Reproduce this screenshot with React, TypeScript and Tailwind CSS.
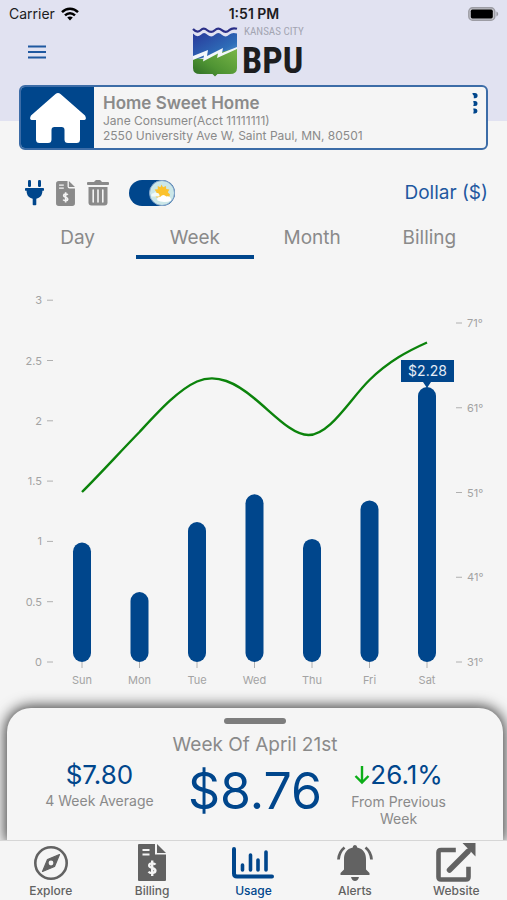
import { useState } from "react";
import type { ReactNode } from "react";

const BLUE = "#00468c";

const USAGE = [
  { day: "Sun", cost: 0.99 },
  { day: "Mon", cost: 0.58 },
  { day: "Tue", cost: 1.16 },
  { day: "Wed", cost: 1.39 },
  { day: "Thu", cost: 1.02 },
  { day: "Fri", cost: 1.34 },
  { day: "Sat", cost: 2.28 },
];
const COST_TICKS = [3, 2.5, 2, 1.5, 1, 0.5, 0];
const TEMP_TICKS = [71, 61, 51, 41, 31];
const BASE = 403;

const dayX = (i: number) => 82 + i * 57.5;
const costY = (v: number) => BASE - v * 120.6;
const tempY = (t: number) => BASE - (t - 31) * 8.475;

function WifiIcon() {
  return (
    <svg width="18" height="14" viewBox="0 0 18 14" fill="none" stroke="#000" strokeWidth="2.4" aria-hidden="true">
      <path d="M1 5.2C5.4.6 12.6.6 17 5.2" />
      <path d="M4 8.4c2.9-2.9 7.1-2.9 10 0" />
      <path d="M9 13.4 6.2 10.6c1.6-1.5 4-1.5 5.6 0z" fill="#000" stroke="none" />
    </svg>
  );
}

function BatteryIcon() {
  return (
    <svg width="31" height="14" viewBox="0 0 31 14" aria-hidden="true">
      <rect x=".8" y=".8" width="26" height="12.4" rx="3.8" fill="#c4c4ca" stroke="#9c9ca4" strokeWidth="1.4" />
      <rect x="2.8" y="2.6" width="22" height="8.8" rx="1.6" fill="#000" />
      <path d="M28.4 4.6c2.4.8 2.4 4 0 4.8z" fill="#9c9ca4" />
    </svg>
  );
}

function Logo() {
  return (
    <svg className="overflow-visible" width="112" height="50" viewBox="0 0 112 50" role="img" aria-label="Kansas City BPU">
      <defs>
        <linearGradient id="sky" x1="0" y1="0" x2="1" y2="1">
          <stop offset="0" stopColor="#28389a" />
          <stop offset=".65" stopColor="#2e6db8" />
          <stop offset="1" stopColor="#67a6d8" />
        </linearGradient>
        <linearGradient id="grass" x1="1" y1="0" x2="0" y2="1">
          <stop offset="0" stopColor="#7ab648" />
          <stop offset=".6" stopColor="#4f9433" />
          <stop offset="1" stopColor="#2b6a25" />
        </linearGradient>
      </defs>
      <path d="M1 6.600q4 4.400 8 1.200q3-3.400 6.400 0q4 3.400 7.400 0q3.600-3.400 7 0q4 3.400 7.200 0q3.400-3 8-1.200V23L1 33z" fill="url(#sky)" />
      <path d="M1 2q4 4.400 7.600 1.200q3.200-3 6.600 0q4 3.400 7.600 0q3.400-3 7 0q4 3.400 7.400 0q3.200-2.800 7.800-1.400" fill="none" stroke="#2b2f88" strokeWidth="2.200" />
      <path d="M1 31 11 32 26 26 45 21V41q0 6-7 6H25.500l-2.500 2.500-2.500-2.500H8q-7 0-7-6z" fill="url(#grass)" />
      <path d="M1 29 16 23 15 29 31 21 30 26 45 20V22L25 31 26 26.500 11 34.500 12 28.500 1 33z" fill="#f2f7fb" />
      <text x="52" y="8" fontSize="11" fill="#a3a5b2" className="font-['Roboto_Condensed','Liberation_Sans_Narrow',sans-serif]">KANSAS CITY</text>
      <text x="50" y="46" fontSize="36" fontWeight="700" fill="#1d1d20" className="font-['Roboto_Condensed','Liberation_Sans_Narrow',sans-serif]">BPU</text>
    </svg>
  );
}

function InvoiceIcon({ size, round }: { size: "small" | "large"; round?: boolean }) {
  return (
    <svg className={size === "small" ? "h-[25px] w-[19px]" : "h-[37px] w-[28px]"} viewBox="0 0 28 37" aria-hidden="true">
      <path
        d={round ? "M4 0H17V8q0 3 3 3H28V33q0 4-4 4H4q-4 0-4-4V4Q0 0 4 0z" : "M1 0H17V10.500H28V36q0 1-1 1H1q-1 0-1-1V1Q0 0 1 0z"}
        fill="currentColor"
      />
      <path d="M19 0 28 9H19z" fill="currentColor" />
      <path d="M4.500 6h7M4.500 10.500h7" stroke="#f5f5f5" strokeWidth="2" />
      <path d="M17.400 20.600c-1-1.600-6-2-6.200.8c-.2 3.200 6.400 2 6.200 5.400c-.2 3-5.600 2.600-6.800.8M14.200 16.500v15.500" stroke="#f5f5f5" strokeWidth="2.400" fill="none" />
    </svg>
  );
}

function PlugIcon() {
  return (
    <svg width="19" height="26" viewBox="0 0 19 26" fill="currentColor" aria-hidden="true">
      <rect x="3" y="0" width="3" height="7" rx="1.200" />
      <rect x="13" y="0" width="3" height="7" rx="1.200" />
      <path d="M.8 8h17.400q.8 0 .8.900v1q0 .9-.9.900h-.7c0 4.700-2.400 7.200-6.100 8V24.500q0 .8-.8.800h-2q-.8 0-.8-.8v-5.700c-3.700-.8-6.100-3.300-6.100-8H.9Q0 10.800 0 9.900v-1Q0 8 .8 8z" />
    </svg>
  );
}

function TrashIcon() {
  return (
    <svg width="22" height="26" viewBox="0 0 22 26" aria-hidden="true">
      <path d="M1 2h6l1.300-1.600q.3-.4.900-.4h3.600q.6 0 .9.400L15 2h6q1 0 1 1v1.200q0 .8-1 .8H1q-1 0-1-.8V3q0-1 1-1z" fill="currentColor" />
      <path d="M1.500 7h19v15.500q0 3-3 3h-13q-3 0-3-3z" fill="currentColor" />
      <path d="M6.200 10v12M11 10v12M15.800 10v12" stroke="#f5f5f5" strokeWidth="1.600" strokeLinecap="round" />
    </svg>
  );
}

function WeatherThumb() {
  return (
    <svg width="26" height="26" viewBox="0 0 26 26" aria-hidden="true">
      <circle cx="13" cy="13" r="12.500" fill="#cbe7e8" stroke="#86a6cb" />
      <path d="m12.500 4.500 1.500 2.700 3-1.200.2 3.100 3.200.4-1.600 2.700 2.200 2.300-1 3H7.500L5.200 14.500l2.200-2.400L5.600 9.600l3.200-.3-.1-3.200 2.700 1.200z" fill="#fbc22d" />
      <path d="M2.500 16.500q-1-3 2-3.200 1.600-2 3.600-.3 2.400-.3 2.600 3.500z" fill="#f0faf9" />
      <path d="M8.500 20.500q-1.400-3.300 2.600-3.500 3.200-3.800 6.300-.5 4.200-.9 4.800 4-3 1.500-7 1.500-4-.1-6.700-1.500z" fill="#fff" />
    </svg>
  );
}

function ExploreIcon() {
  return (
    <svg width="34" height="34" viewBox="0 0 34 34" aria-hidden="true">
      <circle cx="17" cy="17" r="15.700" fill="none" stroke="currentColor" strokeWidth="2.600" />
      <path d="M25.500 8.500 20.500 20.500 8.500 25.500 13.500 13.500z" fill="currentColor" stroke="currentColor" strokeWidth="1.200" strokeLinejoin="round" />
      <circle cx="17" cy="17" r="2.400" fill="#f5f5f5" />
    </svg>
  );
}

function UsageIcon() {
  return (
    <svg width="42" height="32" viewBox="0 0 42 32" fill="none" stroke="currentColor" strokeLinecap="round" aria-hidden="true">
      <path d="M2 2V26.500q0 3 3 3H40" strokeWidth="4" />
      <path d="M10.500 18v5M18.500 8v15M26 13v10M34 5v18" strokeWidth="3.600" />
    </svg>
  );
}

function BellIcon() {
  return (
    <svg width="36" height="36" viewBox="0 0 36 36" aria-hidden="true">
      <path d="M18 0q2.200 0 2.200 2.600C26.500 4 29 8.500 29 14v10.500l3.500 3.500v2H3.500v-2L7 24.500V14C7 8.500 9.500 4 15.800 2.600 15.800 0 18 0 18 0z" fill="currentColor" />
      <path d="M14 32h8q-1 4-4 4t-4-4z" fill="currentColor" />
      <path d="M7.500 2.500Q2 7 1.500 14.500M28.500 2.500Q34 7 34.500 14.500" fill="none" stroke="currentColor" strokeWidth="2.800" />
    </svg>
  );
}

function WebsiteIcon() {
  return (
    <svg width="40" height="39" viewBox="0 0 40 39" aria-hidden="true">
      <path d="M17.500 7H5Q2.500 7 2.500 9.500V34q0 2.500 2.500 2.500H30q2.500 0 2.500-2.500V26" fill="none" stroke="currentColor" strokeWidth="4.600" strokeLinecap="square" />
      <path d="M13.500 27 32 8.500" stroke="currentColor" strokeWidth="5.500" strokeLinecap="round" />
      <path d="M26.500 0H39.500V13.500z" fill="currentColor" />
    </svg>
  );
}

function Chart() {
  return (
    <svg className="block w-full font-['Inter',sans-serif]" viewBox="0 0 507 449" role="img" aria-label="Daily cost and temperature for the week">
      <g fontSize="11" fill="#a3a3a3">
        {COST_TICKS.map((v) => (
          <g key={v}>
            <text x="42" y={costY(v) + 4} textAnchor="end">{v}</text>
            <path d={`M47 ${costY(v)}h6`} stroke="#b0b0b0" />
          </g>
        ))}
        {TEMP_TICKS.map((t) => (
          <g key={t}>
            <path d={`M456 ${tempY(t)}h6`} stroke="#b0b0b0" />
            <text x="467" y={tempY(t) + 4}>{t}°</text>
          </g>
        ))}
        {USAGE.map(({ day, cost }, i) => (
          <g key={day}>
            <path d={`M${dayX(i)} ${BASE}v6`} stroke="#b0b0b0" />
            <rect x={dayX(i) - 9} y={costY(cost)} width="18" height={BASE - costY(cost)} rx="9" fill={BLUE} />
            <text x={dayX(i)} y="425" textAnchor="middle">{day}</text>
          </g>
        ))}
      </g>
      <path
        d="M82 233C101 214 120 193 139.500 173C159 152 178 131 197 122.500C217 114 236 124 254.500 139.500C273.500 155 292 176 308.500 176C330 176 350 140 369.500 121C389 102 408 92 427 83.500"
        fill="none"
        stroke="#0b830b"
        strokeWidth="2.400"
      />
      <path d="M401 101h53v22h-23l-4 6-4-6h-22z" fill={BLUE} />
      <text x="427.500" y="117" textAnchor="middle" fontSize="14" fill="#e4ecf6">$2.28</text>
    </svg>
  );
}

const TABS = ["Day", "Week", "Month", "Billing"];

const NAV: { label: string; icon: ReactNode }[] = [
  { label: "Explore", icon: <ExploreIcon /> },
  { label: "Billing", icon: <InvoiceIcon size="large" /> },
  { label: "Usage", icon: <UsageIcon /> },
  { label: "Alerts", icon: <BellIcon /> },
  { label: "Website", icon: <WebsiteIcon /> },
];

export default function App() {
  const [tab, setTab] = useState("Week");
  const [weather, setWeather] = useState(true);

  return (
    <div className="flex min-h-screen flex-col overflow-hidden bg-[#f5f5f5] font-['Inter',sans-serif] text-[#8a8a8a]">
      <header className="bg-[#e1e2f1] pb-11">
        <div className="grid h-[27px] grid-cols-3 items-center pr-2 pl-[9px] text-[#1c1c22]">
          <div className="flex items-center gap-1.5 text-sm">
            Carrier
            <WifiIcon />
          </div>
          <div className="text-center text-sm font-semibold">1:51 PM</div>
          <div className="flex justify-end">
            <BatteryIcon />
          </div>
        </div>
        <div className="grid grid-cols-[1fr_auto_1fr] items-center pr-10 pl-7">
          <button type="button" aria-label="Menu" className="w-fit text-[#1f58a0]">
            <svg width="18" height="14" viewBox="0 0 18 14" stroke="currentColor" strokeWidth="2" aria-hidden="true">
              <path d="M0 1.500h18M0 7h18M0 12.500h18" />
            </svg>
          </button>
          <Logo />
        </div>
      </header>

      <section className="mx-[19px] -mt-9 flex h-[65px] overflow-hidden rounded-md border-2 border-[#3c6ca7] bg-[#f5f5f5]">
        <div className="flex w-[73px] items-center justify-center bg-[#00468c]">
          <svg width="56" height="50" viewBox="0 0 56 50" fill="#fff" aria-hidden="true">
            <path d="M25.500 1q2.500-2 5 0L55 22.500q2.500 4.500-2 4.500H50V46.500q0 3.500-3.500 3.500H38q-3.500 0-3.500-3.500V37q0-3-3-3h-7q-3 0-3 3v9.500q0 3.500-3.500 3.500H9.500Q6 50 6 46.500V27H3q-4.500 0-2-4.500z" />
          </svg>
        </div>
        <div className="flex flex-1 flex-col justify-center pl-[9px]">
          <h1 className="text-[17px] leading-5 font-semibold">Home Sweet Home</h1>
          <p className="text-xs leading-4">Jane Consumer(Acct 11111111)</p>
          <p className="text-xs leading-[14px]">2550 University Ave W, Saint Paul, MN, 80501</p>
        </div>
        <button type="button" aria-label="Account options" className="self-start pt-1.5 pr-2 text-[#00468c]">
          <svg width="6" height="21" viewBox="0 0 6 21" fill="currentColor" aria-hidden="true">
            <path d="M.5 0H3a2.600 2.600 0 0 1 0 5.200H1.800Q2.400 2.400.5 1zM1.200 8H3a2.500 2.500 0 0 1 0 5H1.200Q2.200 10.500 1.200 8zM1.200 15.500H3a2.500 2.500 0 0 1 0 5H1.200Q2.200 18 1.200 15.500z" />
          </svg>
        </button>
      </section>

      <div className="mt-7 flex h-[30px] items-center px-[19px]">
        <div className="flex flex-1 items-center gap-3 pl-1.5">
          <button type="button" aria-label="Electric" className="text-[#00468c]"><PlugIcon /></button>
          <button type="button" aria-label="Bill"><InvoiceIcon size="small" round /></button>
          <button type="button" aria-label="Trash"><TrashIcon /></button>
          <label className="ml-2 flex w-[46px] cursor-pointer rounded-full bg-[#00468c]">
            <input
              type="checkbox"
              className="sr-only"
              aria-label="Show weather"
              checked={weather}
              onChange={(e) => setWeather(e.target.checked)}
            />
            <span className={weather ? "ml-auto" : ""}><WeatherThumb /></span>
          </label>
        </div>
        <button type="button" className="text-[19px] leading-7 text-[#1f58a0]">Dollar ($)</button>
      </div>

      <div role="tablist" className="mx-[19px] mt-3 grid grid-cols-4">
        {TABS.map((name) => (
          <button
            key={name}
            type="button"
            role="tab"
            aria-selected={tab === name}
            onClick={() => setTab(name)}
            className={`h-[39px] border-b-4 text-[19px] leading-7 ${tab === name ? "border-[#00468c]" : "border-transparent"}`}
          >
            {name}
          </button>
        ))}
      </div>

      <Chart />

      <section className="relative mr-1 ml-[7px] flex-1 rounded-t-3xl bg-[#f5f5f5] px-6 pt-[10px] pb-3 shadow-[0_0_14px_2px_rgba(0,0,0,0.75)]">
        <div className="mx-auto h-1.5 w-[62px] rounded-full bg-[#7d7d7d]" />
        <h2 className="mt-[7px] text-center text-[19px] leading-7">Week Of April 21st</h2>
        <div className="grid grid-cols-[1fr_auto_1fr] gap-2 text-center">
          <div className="pt-0.5 pr-3">
            <p className="text-[26px] leading-7 text-[#00468c]">$7.80</p>
            <p className="text-sm leading-6">4 Week Average</p>
          </div>
          <p className="text-[50px] leading-[64px] text-[#00468c]">$8.76</p>
          <div className="pt-0.5 pr-3">
            <p className="flex items-center justify-center text-[26px] leading-7 text-[#00468c]">
              <svg width="16" height="20" viewBox="0 0 16 20" fill="none" stroke="#0cae18" strokeWidth="2.400" aria-hidden="true">
                <path d="M8 1v16.500M1.500 11 8 17.500 14.500 11" />
              </svg>
              26.1%
            </p>
            <p className="mx-auto w-28 pt-1 text-sm leading-[17px]">From Previous Week</p>
          </div>
        </div>
      </section>

      <nav className="relative grid h-[60px] grid-cols-5 border-t border-[#d6d6d6] bg-[#f5f5f5] text-[#626262]">
        {NAV.map(({ label, icon }) => (
          <a
            key={label}
            href={`#${label.toLowerCase()}`}
            className={`flex flex-col items-center text-xs font-medium ${label === "Usage" ? "text-[#00468c]" : ""}`}
          >
            <span className="flex h-[43px] items-center">{icon}</span>
            <span className="leading-[14px]">{label}</span>
          </a>
        ))}
      </nav>
    </div>
  );
}
